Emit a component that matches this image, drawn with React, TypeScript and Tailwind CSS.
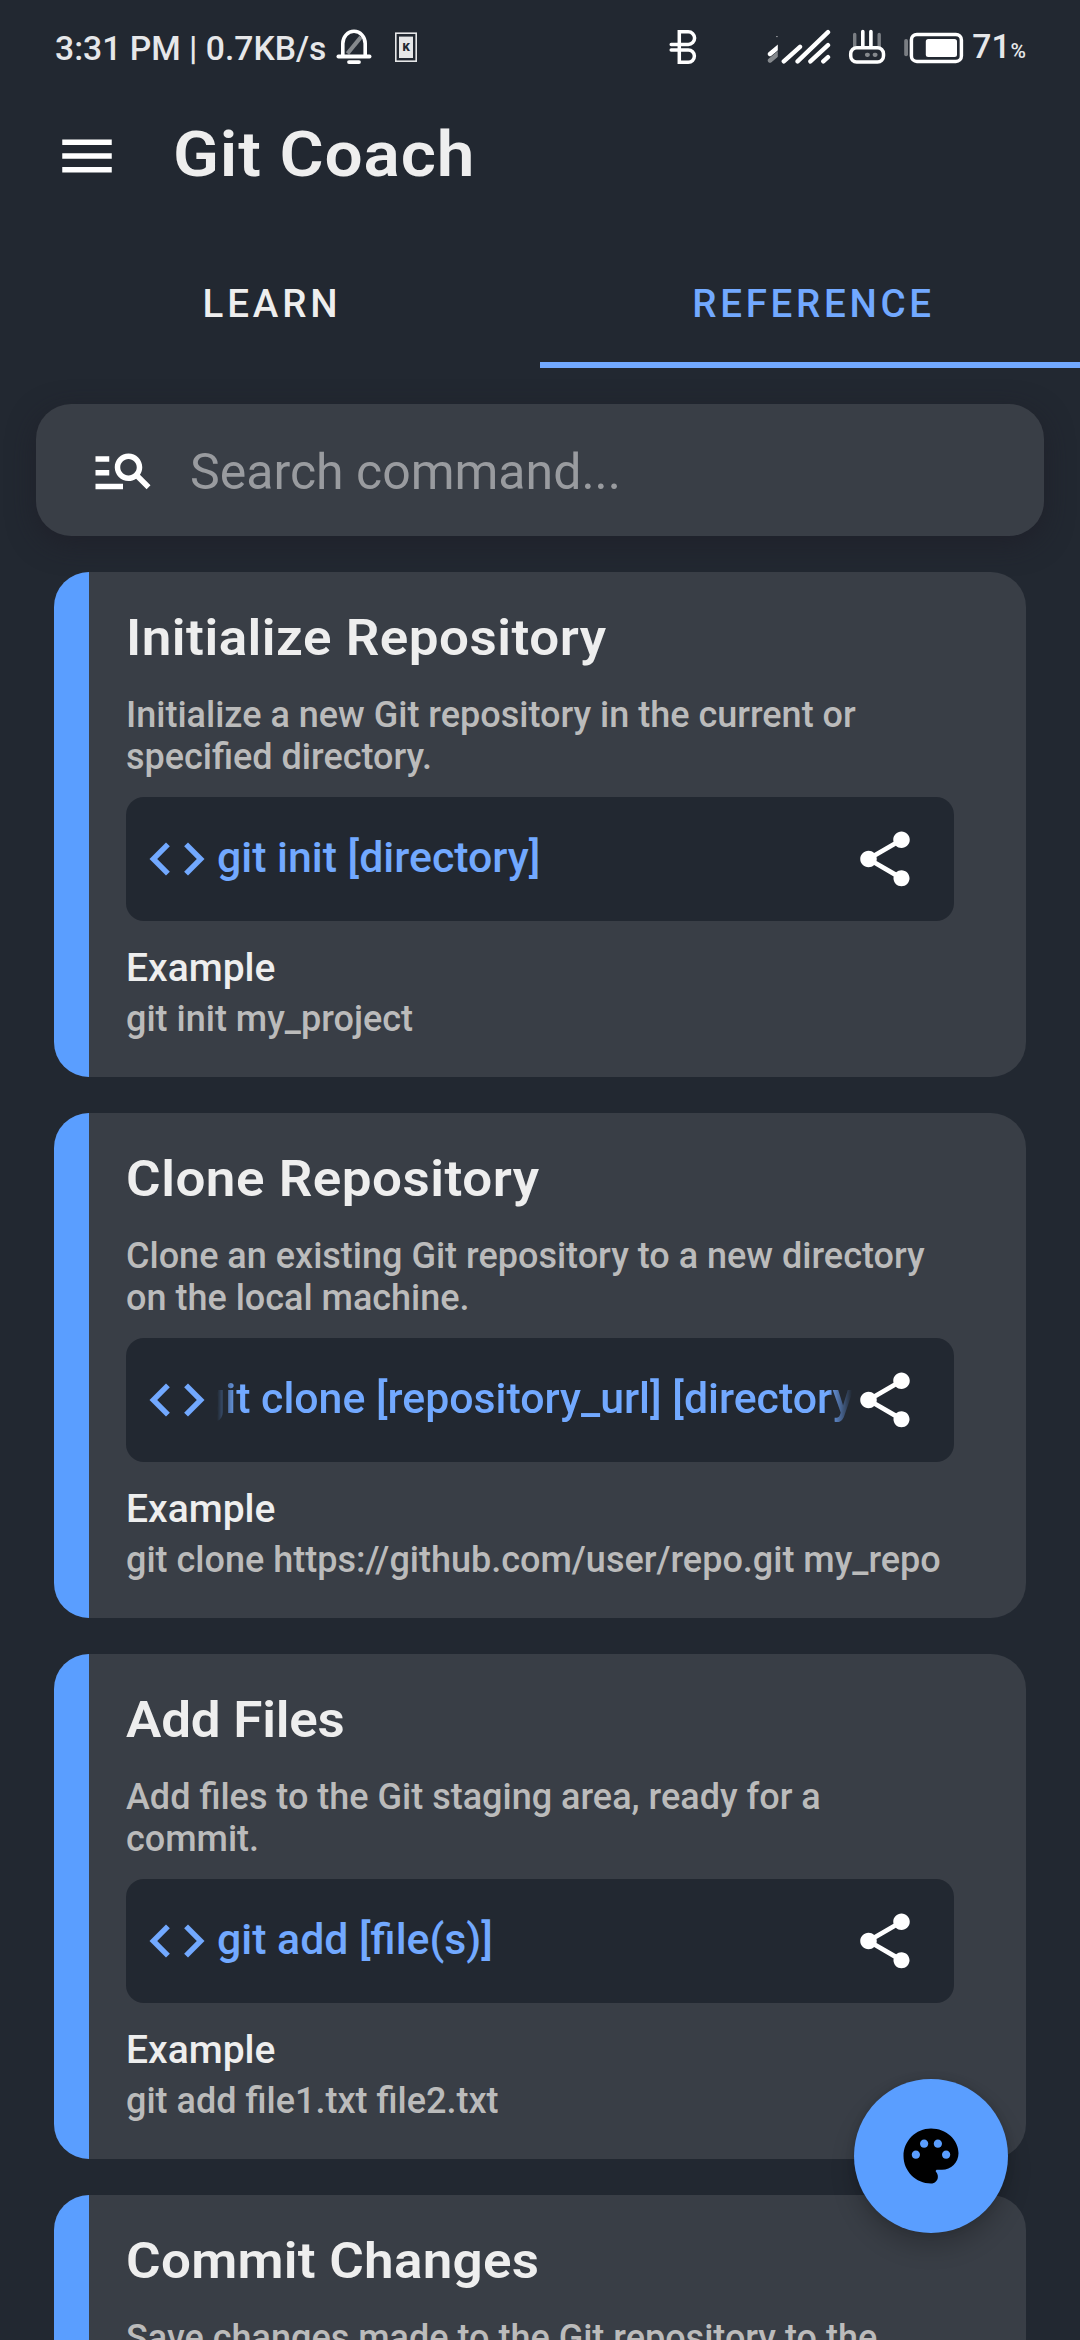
import type { ReactNode } from "react";

type Command = {
  title: string;
  titleTracking: string;
  description: string[];
  code: string;
  scrolled?: boolean;
  example: string;
};

const commands: Command[] = [
  {
    title: "Initialize Repository",
    titleTracking: "tracking-[0.47px]",
    description: ["Initialize a new Git repository in the current or", "specified directory."],
    code: "git init [directory]",
    example: "git init my_project",
  },
  {
    title: "Clone Repository",
    titleTracking: "tracking-[0.47px]",
    description: ["Clone an existing Git repository to a new directory", "on the local machine."],
    code: "git clone [repository_url] [directory]",
    scrolled: true,
    example: "git clone https://github.com/user/repo.git my_repo",
  },
  {
    title: "Add Files",
    titleTracking: "tracking-[-0.2px]",
    description: ["Add files to the Git staging area, ready for a", "commit."],
    code: "git add [file(s)]",
    example: "git add file1.txt file2.txt",
  },
  {
    title: "Commit Changes",
    titleTracking: "tracking-[0.25px]",
    description: ["Save changes made to the Git repository to the"],
    code: "git commit",
    example: "git commit",
  },
];

function Icon({ className, children }: { className: string; children: ReactNode }) {
  return (
    <svg viewBox="0 0 24 24" fill="currentColor" className={`size-[66px] shrink-0 ${className}`}>
      {children}
    </svg>
  );
}

function BellIcon() {
  return (
    <svg viewBox="336 28 36 40" className="ml-[10px] h-10 w-9" fill="none" stroke="#fff" strokeLinecap="round">
      <path d="M347.5 53.5 361 37" strokeWidth="4.2" opacity=".45" strokeLinecap="butt" />
      <path d="M342.8 56V43.5a11.2 12.2 0 0 1 22.4 0V56" strokeWidth="3.6" />
      <path d="M338.4 56.5H369.6" strokeWidth="3.8" />
      <path d="M349 62.1h10" strokeWidth="3.8" />
    </svg>
  );
}

function KeyCardIcon() {
  return (
    <svg viewBox="394 28 24 40" className="ml-[22px] h-10 w-6">
      <rect x="395.8" y="33.2" width="20.4" height="28" fill="none" stroke="#e6e7e8" strokeWidth="1.6" />
      <rect x="399" y="36.6" width="14" height="21.4" fill="#e6e7e8" />
      <text x="406.1" y="51.2" textAnchor="middle" fontSize="11.5" fontWeight="900" fontFamily="Roboto, sans-serif" fill="#222831">
        K
      </text>
    </svg>
  );
}

function BluetoothIcon() {
  return (
    <svg viewBox="668 28 28 40" className="h-10 w-7" fill="none" stroke="#fff" strokeWidth="3.5" strokeLinecap="round">
      <path d="M670.2 44.4H687.3a6.3 6.3 0 0 0 0-12.6H678.3V62.2H687.3a6.1 6.1 0 0 0 0-12.2H670.2" />
    </svg>
  );
}

function SignalIcon() {
  return (
    <svg viewBox="766 28 64 40" className="ml-[70px] h-10 w-16" fill="none" stroke="#fff" strokeWidth="4.4" strokeLinecap="round">
      <clipPath id="weak">
        <rect x="766" y="28" width="10.8" height="40" />
      </clipPath>
      <g clipPath="url(#weak)">
        <path d="M769 60.5 778 53" opacity=".45" />
        <path d="M769 54 778 46.5" />
        <path d="M775 36.6h2" strokeWidth="1" opacity=".5" strokeLinecap="butt" />
      </g>
      <path d="M782.8 61.4 799 46.8M796.6 61.4 827 32.2M809.4 61.4 827 45.2M822.3 61.4 827 57.2" />
    </svg>
  );
}

function RouterIcon() {
  return (
    <svg viewBox="847 28 38 40" className="ml-[17px] h-10 w-[38px]" fill="none" stroke="#fff" strokeLinecap="round">
      <path d="M853.7 34.5V46M878.2 34.5V46" strokeWidth="3.4" opacity=".4" />
      <path d="M861.8 31.6V46M869.9 31.6V46" strokeWidth="3.6" />
      <rect x="849.7" y="47.7" width="32.8" height="14.4" rx="6" strokeWidth="3.5" />
      <path d="M866 54.8h.8M873.7 54.8h.8" strokeWidth="4.2" opacity=".45" />
    </svg>
  );
}

function BatteryIcon() {
  return (
    <svg viewBox="902 28 61 40" className="ml-[17px] h-10 w-[61px]">
      <rect x="903.2" y="39" width="3.8" height="17.2" rx="1.8" fill="#fff" opacity=".4" />
      <rect x="910.4" y="34.4" width="50" height="27" rx="5.5" fill="none" stroke="#fff" strokeWidth="3.5" />
      <rect x="924.8" y="39" width="31.2" height="18" rx="2.5" fill="#fff" />
    </svg>
  );
}

function StatusBar() {
  return (
    <div className="flex h-[79px] shrink-0 items-center justify-between pt-[17px] pr-[54px] pl-[55px] text-[33.7px] leading-10 font-medium text-[#e6e7e9]">
      <div className="flex items-center">
        <span className="pt-px whitespace-pre">3:31 PM | 0.7KB/s</span>
        <BellIcon />
        <KeyCardIcon />
      </div>
      <div className="flex items-center">
        <BluetoothIcon />
        <SignalIcon />
        <RouterIcon />
        <BatteryIcon />
        <span className="ml-2 flex items-baseline pt-px">
          71<span className="text-[21px]">%</span>
        </span>
      </div>
    </div>
  );
}

function CommandCard({ command }: { command: Command }) {
  return (
    <article className="flex h-[505px] shrink-0 overflow-hidden rounded-[35px] bg-[#393e46]">
      <div className="w-[35px] shrink-0 bg-[#5a9eff]" />
      <div className="flex min-w-0 flex-1 flex-col pt-[37px] pr-[72px] pl-[37px]">
        <h2
          className={`origin-left scale-x-[1.07] text-[49.5px] leading-[58px] font-semibold text-[#eee] ${command.titleTracking}`}
        >
          {command.title}
        </h2>
        <p className="mt-[27px] h-[84px] text-[36px] leading-[42px] font-medium text-[#bbb]">
          {command.description.map((line) => (
            <span key={line} className="block whitespace-nowrap">
              {line}
            </span>
          ))}
        </p>
        <div className="mt-[19px] flex h-[124px] items-center rounded-[18px] bg-[#222831] pr-9 pl-[18px]">
          <Icon className="text-[#72a9ff]">
            <path d="M9.4 16.6 4.8 12l4.6-4.6L8 6l-6 6 6 6 1.4-1.4zm5.2 0 4.6-4.6-4.6-4.6L16 6l6 6-6 6-1.4-1.4z" />
          </Icon>
          <div
            className={
              command.scrolled
                ? "ml-[7px] min-w-0 flex-1 overflow-hidden pb-[5px] [mask-image:linear-gradient(to_right,transparent,black_20px,black_calc(100%-24px),transparent)]"
                : "ml-[7px] min-w-0 flex-1 overflow-hidden pb-[5px]"
            }
          >
            <code
              className={`block font-[Roboto,sans-serif] text-[42.8px] leading-[50px] font-medium whitespace-nowrap text-[#72a9ff] ${
                command.scrolled ? "-ml-4" : ""
              }`}
            >
              {command.code}
            </code>
          </div>
          <Icon className="text-white">
            <path d="M18 16.08c-.76 0-1.44.3-1.96.77L8.91 12.7c.05-.23.09-.46.09-.7s-.04-.47-.09-.7l7.05-4.11c.54.5 1.25.81 2.04.81 1.66 0 3-1.34 3-3s-1.34-3-3-3-3 1.34-3 3c0 .24.04.47.09.7L8.04 9.81C7.5 9.31 6.79 9 6 9c-1.66 0-3 1.34-3 3s1.34 3 3 3c.79 0 1.5-.31 2.04-.81l7.12 4.16c-.05.21-.08.43-.08.65 0 1.61 1.31 2.92 2.92 2.92s2.92-1.31 2.92-2.92-1.31-2.92-2.92-2.92z" />
          </Icon>
        </div>
        <h3 className="mt-6 text-[39px] leading-[46px] font-medium text-[#eee]">Example</h3>
        <p className="mt-[7px] text-[36px] leading-[42px] font-medium whitespace-nowrap text-[#bbb]">
          {command.example}
        </p>
      </div>
    </article>
  );
}

export default function App() {
  return (
    <div className="relative flex h-[2340px] w-[1080px] flex-col overflow-hidden bg-[#222831] font-[Roboto,sans-serif]">
      <StatusBar />

      <header className="flex h-[154px] shrink-0 items-center pl-[54px]">
        <Icon className="text-white">
          <path d="M3 18h18v-2H3v2zm0-5h18v-2H3v2zm0-7v2h18V6H3z" />
        </Icon>
        <h1 className="ml-[53px] origin-left scale-x-[1.08] pb-0.5 text-[62.5px] leading-[74px] font-semibold tracking-[0.8px] text-[#eee]">
          Git Coach
        </h1>
      </header>

      <nav className="grid h-[135px] shrink-0 grid-cols-2 text-[38.5px] leading-[46px] font-medium">
        <button className="pt-[7px] pl-1 tracking-[3.85px] text-[#eee]">LEARN</button>
        <button className="border-b-[6px] border-[#72a9ff] pt-[13px] pl-[7px] tracking-[3.7px] text-[#72a9ff]">
          REFERENCE
        </button>
      </nav>

      <div className="mx-9 mt-9 flex h-[132px] shrink-0 items-center rounded-[35px] bg-[#393e46] pl-[54px] shadow-[0_8px_28px_rgba(30,28,38,0.6)]">
        <Icon className="text-white">
          <path d="M7 9H2V7h5v2zm0 3H2v2h5v-2zm13.59 7-3.83-3.83c-.8.52-1.74.83-2.76.83-2.76 0-5-2.24-5-5s2.24-5 5-5 5 2.24 5 5c0 1.02-.31 1.96-.83 2.75L22 17.59 20.59 19zM17 11c0-1.65-1.35-3-3-3s-3 1.35-3 3 1.35 3 3 3 3-1.35 3-3zM2 19h10v-2H2v2z" />
        </Icon>
        <span className="ml-[34px] pt-1 text-[50px] leading-[58px] text-[#999b9f]">Search command...</span>
      </div>

      <main className="mt-9 flex flex-col gap-9 px-[54px]">
        {commands.map((command) => (
          <CommandCard key={command.title} command={command} />
        ))}
      </main>

      <button className="absolute right-[72px] bottom-[107px] flex size-[154px] items-center justify-center rounded-full bg-[#5a9eff] text-black shadow-[0_14px_24px_rgba(0,0,0,0.2),0_0_8px_rgba(0,0,0,0.12)]">
        <Icon className="">
          <path d="M12 2C6.49 2 2 6.49 2 12s4.49 10 10 10c1.38 0 2.5-1.12 2.5-2.5 0-.61-.23-1.2-.64-1.67-.08-.1-.13-.21-.13-.33 0-.28.22-.5.5-.5H16c3.31 0 6-2.69 6-6 0-4.96-4.49-9-10-9zm5.5 11c-.83 0-1.5-.67-1.5-1.5s.67-1.5 1.5-1.5 1.5.67 1.5 1.5-.67 1.5-1.5 1.5zm-3-4c-.83 0-1.5-.67-1.5-1.5S13.67 6 14.5 6s1.5.67 1.5 1.5S15.33 9 14.5 9zM5 11.5c0-.83.67-1.5 1.5-1.5s1.5.67 1.5 1.5S7.33 13 6.5 13 5 12.33 5 11.5zm6-4c0 .83-.67 1.5-1.5 1.5S8 8.33 8 7.5 8.67 6 9.5 6s1.5.67 1.5 1.5z" />
        </Icon>
      </button>
    </div>
  );
}
